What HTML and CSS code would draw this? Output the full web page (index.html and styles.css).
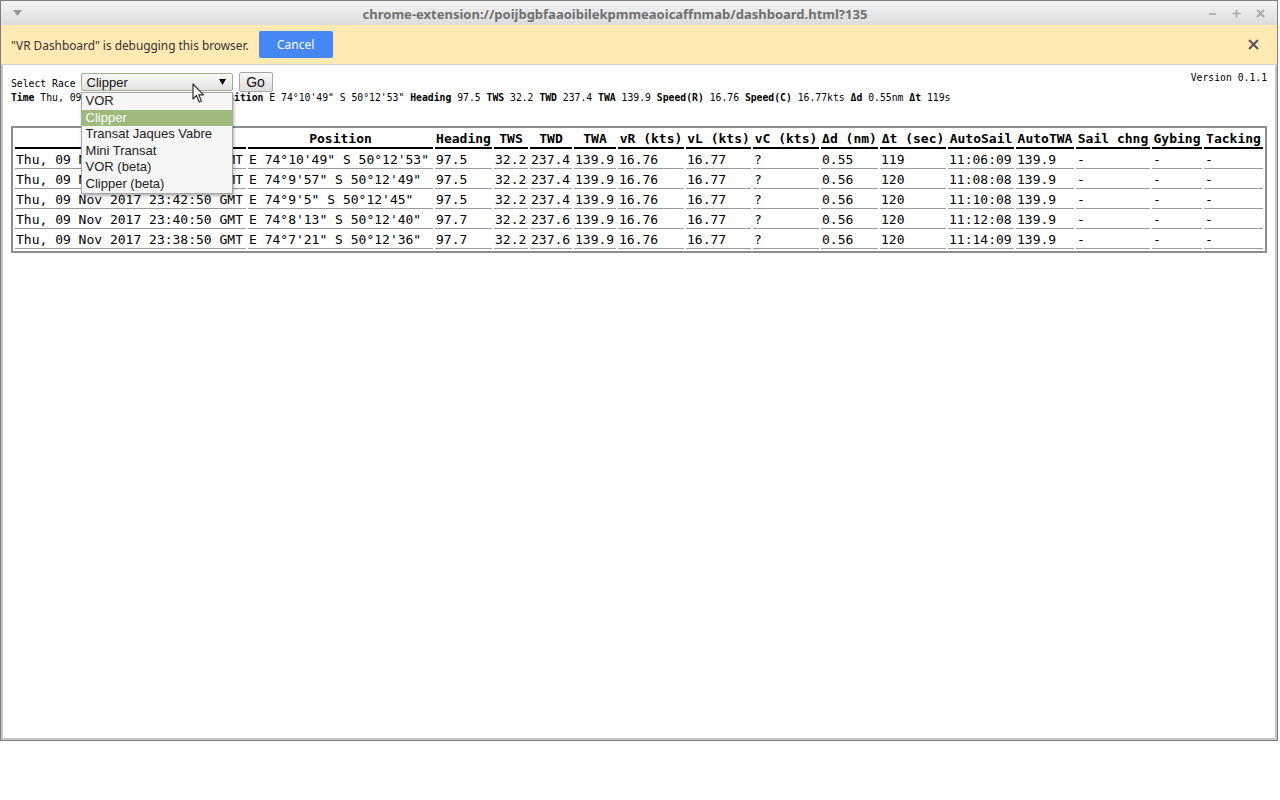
FILE: index.html
```html
<!DOCTYPE html>
<html>
<head>
<meta charset="utf-8">
<title>dashboard</title>
<link rel="stylesheet" href="styles.css">
</head>
<body>
<div class="window">
  <div class="titlebar">
    <div class="tb-left">
      <svg width="9" height="6" viewBox="0 0 9 6"><path d="M0 0 H9 L4.5 6 Z" fill="#9a9a9a"/></svg>
    </div>
    <div class="title">chrome-extension://poijbgbfaaoibilekpmmeaoicaffnmab/dashboard.html?135</div>
    <div class="wm">
      <span class="wm-btn"><svg width="9" height="9" viewBox="0 0 9 9"><path d="M1 5 H8" stroke="#a9a9a9" stroke-width="1.6"/></svg></span>
      <span class="wm-btn"><svg width="9" height="9" viewBox="0 0 9 9"><path d="M0.5 4.5 H8.5 M4.5 0.5 V8.5" stroke="#a9a9a9" stroke-width="1.6"/></svg></span>
      <span class="wm-btn"><svg width="9" height="9" viewBox="0 0 9 9"><path d="M1 1 L8 8 M8 1 L1 8" stroke="#a9a9a9" stroke-width="1.8"/></svg></span>
    </div>
  </div>
  <div class="infobar">
    <span class="info-text">"VR Dashboard" is debugging this browser.</span>
    <button class="cancel">Cancel</button>
    <span class="info-close"><svg width="11" height="11" viewBox="0 0 11 11"><path d="M1 1 L10 10 M10 1 L1 10" stroke="#555" stroke-width="2"/></svg></span>
  </div>
  <div class="page">
    <div class="controls">
      <span class="label">Select Race</span>
      <div class="select">
        <span class="select-value">Clipper</span>
        <span class="select-arrow"><svg width="7" height="6" viewBox="0 0 7 6"><path d="M0 0 H7 L3.5 6 Z" fill="#000"/></svg></span>
        <ul class="dropdown">
          <li>VOR</li>
          <li class="selected">Clipper</li>
          <li>Transat Jaques Vabre</li>
          <li>Mini Transat</li>
          <li>VOR (beta)</li>
          <li>Clipper (beta)</li>
        </ul>
      </div>
      <button class="go">Go</button>
      <span class="version">Version 0.1.1</span>
    </div>
    <div class="status"><b>Time</b> Thu, 09 Nov 2017 23:46:50 GMT <b>Position</b> E 74°10'49" S 50°12'53" <b>Heading</b> 97.5 <b>TWS</b> 32.2 <b>TWD</b> 237.4 <b>TWA</b> 139.9 <b>Speed(R)</b> 16.76 <b>Speed(C)</b> 16.77kts <b>Δd</b> 0.55nm <b>Δt</b> 119s</div>
    <table class="log">
      <thead>
        <tr>
          <th class="c-time"></th><th class="c-pos">Position</th><th class="c-hdg">Heading</th><th class="c-tws">TWS</th><th class="c-twd">TWD</th><th class="c-twa">TWA</th><th class="c-vr">vR (kts)</th><th class="c-vl">vL (kts)</th><th class="c-vc">vC (kts)</th><th class="c-dd">Δd (nm)</th><th class="c-dt">Δt (sec)</th><th class="c-as">AutoSail</th><th class="c-at">AutoTWA</th><th class="c-sc">Sail chng</th><th class="c-gy">Gybing</th><th class="c-tk">Tacking</th>
        </tr>
      </thead>
      <tbody>
        <tr><td>Thu, 09 Nov 2017 23:46:50 GMT</td><td>E 74°10'49" S 50°12'53"</td><td>97.5</td><td>32.2</td><td>237.4</td><td>139.9</td><td>16.76</td><td>16.77</td><td>?</td><td>0.55</td><td>119</td><td>11:06:09</td><td>139.9</td><td>-</td><td>-</td><td>-</td></tr>
        <tr><td>Thu, 09 Nov 2017 23:44:50 GMT</td><td>E 74°9'57" S 50°12'49"</td><td>97.5</td><td>32.2</td><td>237.4</td><td>139.9</td><td>16.76</td><td>16.77</td><td>?</td><td>0.56</td><td>120</td><td>11:08:08</td><td>139.9</td><td>-</td><td>-</td><td>-</td></tr>
        <tr><td>Thu, 09 Nov 2017 23:42:50 GMT</td><td>E 74°9'5" S 50°12'45"</td><td>97.5</td><td>32.2</td><td>237.4</td><td>139.9</td><td>16.76</td><td>16.77</td><td>?</td><td>0.56</td><td>120</td><td>11:10:08</td><td>139.9</td><td>-</td><td>-</td><td>-</td></tr>
        <tr><td>Thu, 09 Nov 2017 23:40:50 GMT</td><td>E 74°8'13" S 50°12'40"</td><td>97.7</td><td>32.2</td><td>237.6</td><td>139.9</td><td>16.76</td><td>16.77</td><td>?</td><td>0.56</td><td>120</td><td>11:12:08</td><td>139.9</td><td>-</td><td>-</td><td>-</td></tr>
        <tr><td>Thu, 09 Nov 2017 23:38:50 GMT</td><td>E 74°7'21" S 50°12'36"</td><td>97.7</td><td>32.2</td><td>237.6</td><td>139.9</td><td>16.76</td><td>16.77</td><td>?</td><td>0.56</td><td>120</td><td>11:14:09</td><td>139.9</td><td>-</td><td>-</td><td>-</td></tr>
      </tbody>
    </table>
  </div>
  <svg class="cursor" width="13" height="21" viewBox="0 0 13 21"><path d="M1 1 L1 16 L4.5 12.5 L7.2 19 L9.4 18 L6.8 11.8 L11.5 11.8 Z" fill="#fff" stroke="#333" stroke-width="1.2" stroke-linejoin="round"/></svg>
</div>
</body>
</html>
```
FILE: styles.css
```css
* { box-sizing: border-box; }

html, body {
  margin: 0;
  background: #ffffff;
}

.window {
  position: relative;
  width: 1278px;
  height: 741px;
  border: 1px solid #7d7d7d;
  display: flex;
  flex-direction: column;
  background: #ffffff;
}

/* Title bar */
.titlebar {
  height: 24px;
  flex: 0 0 24px;
  display: flex;
  align-items: center;
  background: linear-gradient(#f4f4f4, #dcdcdc);
}

.tb-left {
  width: 29px;
  padding-left: 12px;
  display: flex;
  align-items: center;
}

.title {
  flex: 1;
  text-align: center;
  font-family: "Noto Sans", "DejaVu Sans", sans-serif;
  font-weight: bold;
  font-size: 13px;
  color: #707070;
  white-space: nowrap;
  padding-top: 2px;
}

.wm {
  width: 77px;
  padding-right: 5px;
  display: flex;
}

.wm-btn {
  width: 24px;
  display: flex;
  justify-content: center;
  align-items: center;
}

/* Info bar */
.infobar {
  height: 40px;
  flex: 0 0 40px;
  display: flex;
  align-items: center;
  padding: 0 18px 0 10px;
  background: #feeab2;
  border-bottom: 1px solid #cfcfcf;
}

.info-text {
  font-family: "Noto Sans", "DejaVu Sans", sans-serif;
  font-size: 11.85px;
  color: #333333;
}

.cancel {
  margin-left: 10px;
  width: 74px;
  height: 27px;
  border: none;
  border-radius: 2px;
  background: #4687f3;
  color: #ffffff;
  font-family: "Noto Sans", "DejaVu Sans", sans-serif;
  font-size: 12px;
  padding: 0;
}

.info-close {
  margin-left: auto;
  display: flex;
}

/* Page */
.page {
  flex: 1;
  border-style: solid;
  border-color: #c6c6c6;
  border-width: 0 2px 2px 2px;
  padding: 8px;
  font-family: "DejaVu Sans Mono", monospace;
  font-size: 9.75px;
  color: #000000;
}

.controls {
  display: flex;
  align-items: center;
  height: 20px;
  margin-top: -1px;
}

.label {
  margin-right: 5px;
  margin-top: 2px;
}

.select {
  position: relative;
  width: 152px;
  height: 18px;
  border: 1px solid #9db28a;
  border-radius: 2px;
  background: linear-gradient(#fbfbfb, #e2e2e2);
  display: flex;
  align-items: center;
  padding-left: 5px;
  font-family: "Liberation Sans", Arial, sans-serif;
  font-size: 13px;
  color: #111111;
}

.select-arrow {
  margin-left: auto;
  margin-right: 6px;
  display: flex;
}

.dropdown {
  position: absolute;
  top: 18px;
  left: -1px;
  width: 152px;
  margin: 0;
  padding: 0;
  list-style: none;
  background: #f6f6f6;
  border: 1px solid #a5a5a5;
  box-shadow: 1px 2px 3px rgba(0, 0, 0, 0.3);
  z-index: 2;
}

.dropdown li {
  line-height: 16.6px;
  height: 16.6px;
  padding-left: 4px;
  color: #222222;
  white-space: nowrap;
}

.dropdown li.selected {
  background: #9eb97c;
  color: #ffffff;
}

.go {
  margin-left: 6px;
  width: 34px;
  height: 20px;
  padding: 0;
  border: 1px solid #a8a8a8;
  border-radius: 2px;
  background: linear-gradient(#f7f7f7, #dedede);
  font-family: "Liberation Sans", Arial, sans-serif;
  font-size: 14px;
  color: #111111;
}

.version {
  margin-left: auto;
  align-self: flex-start;
  line-height: 12px;
  margin-top: 0;
}

.status {
  line-height: 12px;
  white-space: nowrap;
}

/* Log table */
.log {
  margin-top: 22px;
  width: 100%;
  table-layout: fixed;
  border: 2px solid #8e8e8e;
  border-spacing: 2px;
  font-family: "DejaVu Sans Mono", monospace;
  font-size: 13px;
  line-height: 15px;
}

.log th,
.log td {
  padding: 1px;
  white-space: nowrap;
  overflow: visible;
}

.log th {
  font-weight: bold;
  text-align: center;
  border-bottom: 2px solid #000000;
}

.log td {
  text-align: left;
  border-bottom: 1px solid #9a9a9a;
}

.c-time { width: 231px; }
.c-pos  { width: 185px; }
.c-hdg  { width: 57px; }
.c-tws  { width: 34px; }
.c-twd  { width: 42px; }
.c-twa  { width: 42px; }
.c-vr   { width: 66px; }
.c-vl   { width: 65px; }
.c-vc   { width: 66px; }
.c-dd   { width: 57px; }
.c-dt   { width: 66px; }
.c-as   { width: 66px; }
.c-at   { width: 58px; }
.c-sc   { width: 74px; }
.c-gy   { width: 50px; }
.c-tk   { width: 59px; }

.cursor {
  position: absolute;
  left: 191px;
  top: 82px;
  z-index: 5;
}
```
